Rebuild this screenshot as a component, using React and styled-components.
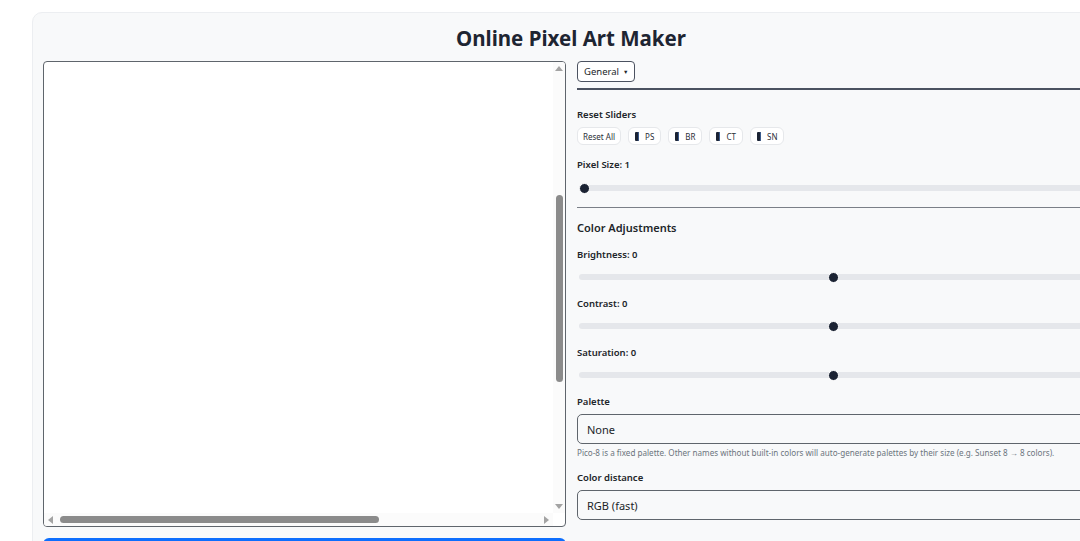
import React from 'react';
import styled, { createGlobalStyle } from 'styled-components';

const GlobalStyle = createGlobalStyle`
  html, body {
    margin: 0;
    padding: 0;
    background: #ffffff;
    overflow: hidden;
  }
  body {
    font-family: "Noto Sans", "Open Sans", Arial, sans-serif;
    color: #212529;
  }
`;

const Page = styled.div`
  padding: 12px 0 0 32px;
`;

const Shell = styled.div`
  width: 1078px;
  box-sizing: border-box;
  background: #f8f9fa;
  border: 1px solid #eceef1;
  border-radius: 10px;
  padding: 11px 10px 20px;
`;

const Title = styled.h1`
  margin: 0 0 9px;
  text-align: center;
  font-size: 20.5px;
  line-height: 28px;
  font-weight: 700;
  color: #1e2532;
`;

const Columns = styled.div`
  display: grid;
  grid-template-columns: 523px 1fr;
  gap: 11px;
  align-items: start;
`;

const LeftCol = styled.div`
  display: flex;
  flex-direction: column;
  gap: 11px;
`;

const CanvasViewport = styled.div`
  position: relative;
  height: 466px;
  box-sizing: border-box;
  border: 1px solid #5f656c;
  border-radius: 4px;
  background: #ffffff;
  overflow: hidden;
`;

/* fake native scrollbars, drawn over the canvas area */
const VTrack = styled.div`
  position: absolute;
  top: 0;
  right: 0;
  bottom: 13px;
  width: 12px;
  background: #fbfbfb;
  display: flex;
  flex-direction: column;
  align-items: center;
  justify-content: space-between;
  padding: 4px 0;
  box-sizing: border-box;
`;

const HTrack = styled.div`
  position: absolute;
  left: 0;
  right: 12px;
  bottom: 0;
  height: 13px;
  background: #fbfbfb;
  display: flex;
  align-items: center;
  justify-content: space-between;
  padding: 0 4px;
  box-sizing: border-box;
`;

const Arrow = styled.span`
  width: 0;
  height: 0;
  border: 4px solid transparent;
  ${(p) => p.$dir === 'up' && 'border-bottom: 5px solid #a3a3a3; border-top-width: 0;'}
  ${(p) => p.$dir === 'down' && 'border-top: 5px solid #a3a3a3; border-bottom-width: 0;'}
  ${(p) => p.$dir === 'left' && 'border-right: 5px solid #a3a3a3; border-left-width: 0;'}
  ${(p) => p.$dir === 'right' && 'border-left: 5px solid #a3a3a3; border-right-width: 0;'}
`;

const Thumb = styled.span`
  position: absolute;
  background: #8b8b8b;
  border-radius: 4px;
`;

const RenderButton = styled.button`
  height: 40px;
  border: none;
  border-radius: 6px;
  background: #0d6efd;
  color: #ffffff;
  font: inherit;
`;

const RightCol = styled.div`
  display: flex;
  flex-direction: column;
`;

const TabBar = styled.div`
  display: flex;
  padding-bottom: 6px;
  border-bottom: 2px solid #4b5260;
`;

const TabButton = styled.button`
  height: 21px;
  padding: 0 6px;
  border: 1px solid #4b5260;
  border-radius: 4px;
  background: #ffffff;
  font-family: inherit;
  font-size: 9.5px;
  color: #212529;
  display: flex;
  align-items: center;
  gap: 4px;
  span { font-size: 5.5px; }
`;

const Label = styled.div`
  font-size: 9.5px;
  font-weight: 600;
  line-height: 14px;
  padding-top: 1px;
  color: #212529;
  margin-top: ${(p) => p.$top || 0}px;
`;

const ChipRow = styled.div`
  display: flex;
  gap: 7px;
  margin-top: 5px;
`;

const Chip = styled.button`
  height: 18px;
  padding: 0 ${(p) => (p.$wide ? 5 : 6)}px;
  border: 1px solid #e6e8eb;
  border-radius: 6px;
  background: #ffffff;
  font-family: inherit;
  font-size: 8px;
  color: #2b3038;
  display: flex;
  align-items: center;
  gap: 6px;
`;

const ChipMark = styled.i`
  display: block;
  width: 4px;
  height: 9px;
  border-radius: 1px;
  background: #1b2333;
  box-shadow: inset -1px 0 0 #3a5a8c;
`;

const Range = styled.input.attrs({ type: 'range' })`
  -webkit-appearance: none;
  appearance: none;
  display: block;
  width: calc(100% - 14px);
  height: 10px;
  margin: ${(p) => p.$top || 10}px 0 0 2px;
  padding: 0;
  background: transparent;

  &::-webkit-slider-runnable-track {
    height: 6px;
    border-radius: 3px;
    background: #e5e7eb;
  }
  &::-webkit-slider-thumb {
    -webkit-appearance: none;
    width: 11px;
    height: 11px;
    margin-top: -2.5px;
    border-radius: 50%;
    background: #1b2333;
    border: 1px solid #ffffff;
  }
`;

const Divider = styled.hr`
  margin: 14px 0 0;
  border: none;
  border-top: 1px solid #7a7f87;
`;

const SectionTitle = styled.div`
  margin-top: 12px;
  font-size: 11px;
  font-weight: 600;
  line-height: 16px;
  color: #212529;
`;

const Select = styled.div`
  margin-top: 5px;
  height: 30px;
  box-sizing: border-box;
  border: 1px solid #5f656c;
  border-radius: 5px;
  background: #f8f9fa;
  display: flex;
  align-items: center;
  padding: 0 9px;
  font-size: 11px;
  color: #212529;
`;

const Hint = styled.div`
  margin-top: 3px;
  font-size: 8.1px;
  line-height: 12px;
  color: #6c757d;
  white-space: nowrap;
`;

const adjustments = [
  { key: 'brightness', label: 'Brightness', top: 11 },
  { key: 'contrast', label: 'Contrast', top: 14 },
  { key: 'saturation', label: 'Saturation', top: 14 },
];

const resetChips = ['PS', 'BR', 'CT', 'SN'];

export default function App() {
  return (
    <Page>
      <GlobalStyle />
      <Shell>
        <Title>Online Pixel Art Maker</Title>
        <Columns>
          <LeftCol>
            <CanvasViewport>
              <VTrack>
                <Arrow $dir="up" />
                <Thumb style={{ top: 133, height: 187, left: 2.5, width: 7 }} />
                <Arrow $dir="down" />
              </VTrack>
              <HTrack>
                <Arrow $dir="left" />
                <Thumb style={{ left: 16, width: 319, top: 3, height: 7 }} />
                <Arrow $dir="right" />
              </HTrack>
            </CanvasViewport>
            <RenderButton />
          </LeftCol>

          <RightCol>
            <TabBar>
              <TabButton>General <span>▼</span></TabButton>
            </TabBar>

            <Label $top={17}>Reset Sliders</Label>
            <ChipRow>
              <Chip $wide>Reset All</Chip>
              {resetChips.map((c) => (
                <Chip key={c}><ChipMark />{c}</Chip>
              ))}
            </ChipRow>

            <Label $top={12}>Pixel Size: 1</Label>
            <Range $top={11} min={1} max={64} defaultValue={1} readOnly />

            <Divider />
            <SectionTitle>Color Adjustments</SectionTitle>
            {adjustments.map((a) => (
              <React.Fragment key={a.key}>
                <Label $top={a.top}>{a.label}: 0</Label>
                <Range min={-100} max={100} defaultValue={0} readOnly />
              </React.Fragment>
            ))}

            <Label $top={14}>Palette</Label>
            <Select>None</Select>
            <Hint>
              Pico-8 is a fixed palette. Other names without built-in colors will auto-generate palettes by their size (e.g. Sunset 8 → 8 colors).
            </Hint>

            <Label $top={11}>Color distance</Label>
            <Select>RGB (fast)</Select>
          </RightCol>
        </Columns>
      </Shell>
    </Page>
  );
}
